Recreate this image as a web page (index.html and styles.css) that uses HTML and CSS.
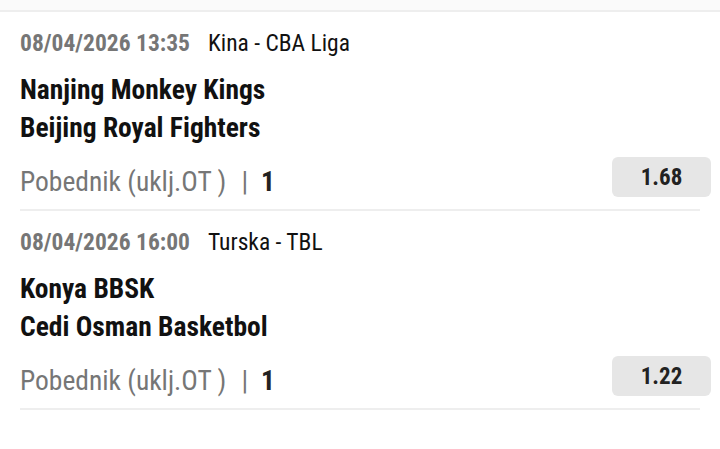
FILE: index.html
```html
<!DOCTYPE html>
<html lang="sr">
<head>
<meta charset="utf-8">
<title>Ponuda</title>
<link rel="stylesheet" href="styles.css">
</head>
<body>
<div class="topband"></div>
<div class="list">
  <div class="event">
    <div class="meta"><span class="date">08/04/2026 13:35</span><span class="league">Kina - CBA Liga</span></div>
    <div class="teams">
      <div class="team">Nanjing Monkey Kings</div>
      <div class="team">Beijing Royal Fighters</div>
    </div>
    <div class="market">
      <div class="pick"><span class="mname">Pobednik (uklj.OT )</span><span class="sep">|</span><span class="sel">1</span></div>
      <div class="odd">1.68</div>
    </div>
  </div>
  <div class="event">
    <div class="meta"><span class="date">08/04/2026 16:00</span><span class="league">Turska - TBL</span></div>
    <div class="teams">
      <div class="team">Konya BBSK</div>
      <div class="team">Cedi Osman Basketbol</div>
    </div>
    <div class="market">
      <div class="pick"><span class="mname">Pobednik (uklj.OT )</span><span class="sep">|</span><span class="sel">1</span></div>
      <div class="odd">1.22</div>
    </div>
  </div>
</div>
</body>
</html>
```
FILE: styles.css
```css
html, body {
  margin: 0;
  padding: 0;
  background: #ffffff;
}
body {
  font-family: Roboto, "Liberation Sans", sans-serif;
  font-stretch: 87.5%;
  color: #111111;
}
.topband {
  height: 10px;
  background: #fafafa;
  border-bottom: 2px solid #eeeeee;
}
.list {
  padding: 0 20px;
}
.event {
  border-bottom: 2px solid #eeeeee;
  padding-top: 17px;
  padding-bottom: 7px;
}
.meta {
  display: flex;
  align-items: baseline;
  font-size: 23.5px;
  line-height: 28px;
}
.date {
  color: #767676;
  font-weight: 700;
  margin-right: 18px;
}
.league {
  color: #111111;
}
.teams {
  margin-top: 14px;
}
.team {
  font-size: 27.5px;
  line-height: 38px;
  font-weight: 700;
  color: #111111;
}
.market {
  display: flex;
  align-items: flex-start;
  justify-content: space-between;
  margin-top: 10px;
  margin-right: -11px;
}
.pick {
  display: flex;
  align-items: baseline;
  font-size: 27.5px;
  line-height: 40px;
  margin-top: 5px;
}
.mname {
  color: #767676;
}
.sep {
  color: #767676;
  margin: 0 13px 0 15px;
}
.sel {
  color: #222222;
  font-weight: 700;
}
.odd {
  width: 99px;
  height: 40px;
  border-radius: 6px;
  background: #e6e6e6;
  display: flex;
  align-items: center;
  justify-content: center;
  font-size: 23px;
  font-weight: 700;
  color: #222222;
}
```
